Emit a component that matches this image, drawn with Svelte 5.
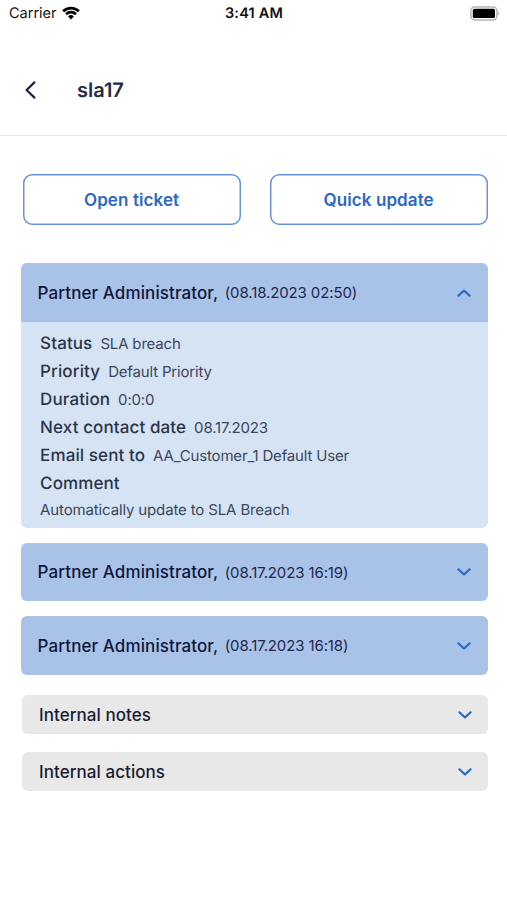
<script>
    let title = "sla17";

    let updates = [
        {
            name: "Partner Administrator,",
            date: "(08.18.2023 02:50)",
            open: true,
            fields: [
                { label: "Status", value: "SLA breach" },
                { label: "Priority", value: "Default Priority" },
                { label: "Duration", value: "0:0:0" },
                { label: "Next contact date", value: "08.17.2023" },
                { label: "Email sent to", value: "AA_Customer_1 Default User" },
                { label: "Comment", value: "" },
            ],
            comment: "Automatically update to SLA Breach",
        },
        { name: "Partner Administrator,", date: "(08.17.2023 16:19)", open: false, fields: [], comment: "" },
        { name: "Partner Administrator,", date: "(08.17.2023 16:18)", open: false, fields: [], comment: "" },
    ];

    let sections = ["Internal notes", "Internal actions"];

    function toggle(i) {
        updates[i].open = !updates[i].open;
    }
</script>

<div class="screen">
    <div class="statusbar">
        <div class="carrier">
            <span>Carrier</span>
            <svg width="18" height="14" viewBox="0 0 18 14">
                <path d="M0.2 4.3 A12.4 12.4 0 0 1 17.8 4.3 L15.9 6.3 A9.8 9.8 0 0 0 2.1 6.3 Z" />
                <path d="M3.1 7.3 A8.3 8.3 0 0 1 14.9 7.3 L13 9.2 A5.7 5.7 0 0 0 5 9.2 Z" />
                <path d="M6.1 10.4 A4.2 4.2 0 0 1 11.9 10.4 L9 13.4 Z" />
            </svg>
        </div>
        <div class="time">3:41 AM</div>
        <div class="battery">
            <svg width="30" height="15" viewBox="0 0 30 15">
                <rect x="0.9" y="0.9" width="26" height="13" rx="3.8" fill="#fff" stroke="#b5b5b5" stroke-width="1.5" />
                <rect x="2.8" y="2.8" width="22.2" height="9.2" rx="1.6" />
                <path d="M28.2 5.2 Q30.4 7.4 28.2 9.6 Z" fill="#a8a8a8" />
            </svg>
        </div>
    </div>

    <header>
        <button class="back" aria-label="Back">
            <svg width="12" height="18" viewBox="0 0 12 18">
                <path d="M10.4 1.4 L2.6 9 L10.4 16.6" />
            </svg>
        </button>
        <h1>{title}</h1>
    </header>

    <main>
        <div class="buttons">
            <button>Open ticket</button>
            <button>Quick update</button>
        </div>

        <div class="updates">
            {#each updates as update, i}
                <div class="update">
                    <button class="head" class:open={update.open} on:click={() => toggle(i)}>
                        <span class="name">{update.name}</span>
                        <span class="date">{update.date}</span>
                        <svg class="chevron" class:up={update.open} width="14" height="10" viewBox="0 0 14 10">
                            <path d="M1.4 2.3 L7 7.5 L12.6 2.3" />
                        </svg>
                    </button>
                    {#if update.open}
                        <div class="details">
                            {#each update.fields as field}
                                <div class="field">
                                    <span class="label">{field.label}</span>
                                    <span class="value">{field.value}</span>
                                </div>
                            {/each}
                            <p>{update.comment}</p>
                        </div>
                    {/if}
                </div>
            {/each}
        </div>

        <div class="sections">
            {#each sections as section}
                <button class="section">
                    <span>{section}</span>
                    <svg class="chevron" width="14" height="10" viewBox="0 0 14 10">
                        <path d="M1.4 2.3 L7 7.5 L12.6 2.3" />
                    </svg>
                </button>
            {/each}
        </div>
    </main>
</div>

<style>
    :global(body) {
        margin: 0;
        background: #fff;
    }

    .screen {
        box-sizing: border-box;
        width: 100%;
        height: 900px;
        background: #fff;
        font-family: Inter, "Liberation Sans", sans-serif;
        color: #10163a;
        text-rendering: geometricPrecision;
    }

    button {
        font: inherit;
        color: inherit;
        border: none;
        background: none;
        padding: 0;
        cursor: pointer;
    }

    .statusbar {
        display: grid;
        grid-template-columns: 1fr auto 1fr;
        align-items: center;
        height: 28px;
        padding: 0 7px 0 9px;
        box-sizing: border-box;
        color: #111;
        font-size: 14.5px;
        line-height: 18px;
    }

    .carrier {
        display: flex;
        align-items: center;
        gap: 5px;
    }

    .carrier svg {
        margin-top: -3px;
    }

    .time {
        margin-right: 1px;
        font-weight: 600;
        letter-spacing: 0.2px;
    }

    .battery {
        display: flex;
        justify-content: flex-end;
        margin-top: -2px;
    }

    header {
        display: flex;
        align-items: center;
        height: 107px;
        padding: 0 24px;
        border-bottom: 1px solid #e6e6e8;
    }

    .back {
        display: flex;
        width: 53px;
        margin-top: 17px;
    }

    .back path {
        fill: none;
        stroke: #1c2140;
        stroke-width: 2.2;
        stroke-linecap: round;
        stroke-linejoin: round;
    }

    h1 {
        margin: 17px 0 0;
        font-size: 20px;
        font-weight: 600;
        line-height: 24px;
        color: #252c45;
    }

    main {
        padding: 38px 19.4px 0 20.6px;
    }

    .buttons {
        display: flex;
        gap: 29px;
        padding-left: 2px;
    }

    .buttons button {
        flex: 1;
        height: 51px;
        border-radius: 9px;
        box-shadow: inset 0 0 0 1.5px #6694d8;
        color: #2a69c4;
        font-size: 17px;
        font-weight: 600;
        letter-spacing: 0.1px;
    }

    .updates {
        display: flex;
        flex-direction: column;
        gap: 15px;
        margin-top: 38px;
    }

    .update {
        border-radius: 6px;
        overflow: hidden;
        background: #d6e3f5;
    }

    .head {
        display: flex;
        align-items: center;
        width: 100%;
        height: 58.4px;
        padding: 0 17px;
        background: #a9c3e8;
    }

    .head.open {
        height: 59px;
    }

    .name {
        font-size: 17px;
        font-weight: 500;
        letter-spacing: 0.1px;
    }

    .date {
        margin-left: 6.5px;
        font-size: 15px;
        letter-spacing: -0.12px;
        color: #1f2748;
    }

    .chevron {
        margin-left: auto;
    }

    .chevron.up {
        transform: rotate(180deg);
    }

    .chevron path {
        fill: none;
        stroke: #2467c5;
        stroke-width: 2.1;
        stroke-linecap: round;
        stroke-linejoin: round;
    }

    .details {
        height: 206px;
        box-sizing: border-box;
        padding: 8px 19.5px 0;
        color: #2b3549;
    }

    .field {
        display: flex;
        align-items: baseline;
        gap: 8px;
        height: 28px;
        line-height: 28px;
    }

    .label {
        font-size: 17px;
        font-weight: 500;
        letter-spacing: 0.1px;
    }

    .value {
        font-size: 15px;
        letter-spacing: -0.17px;
        color: #3c475a;
    }

    .details p {
        margin: 0;
        font-size: 15px;
        line-height: 24px;
        letter-spacing: -0.14px;
        color: #3c475a;
    }

    .sections {
        display: flex;
        flex-direction: column;
        gap: 18.4px;
        margin-top: 20px;
        padding-left: 1.5px;
    }

    .section {
        display: flex;
        align-items: center;
        height: 39px;
        padding: 1px 15.5px 0 17px;
        border-radius: 6px;
        background: #e8e8e8;
        color: #1a1c33;
        font-size: 17px;
        font-weight: 500;
        letter-spacing: 0.05px;
    }
</style>
